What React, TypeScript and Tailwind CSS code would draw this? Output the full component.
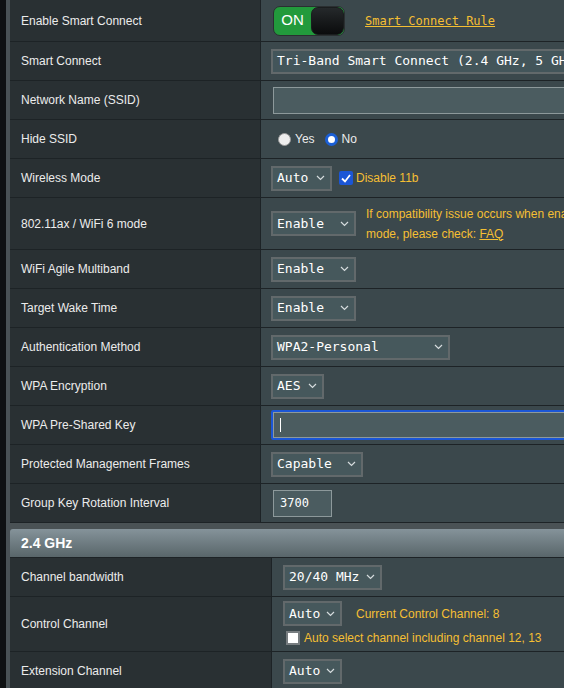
import type { ReactNode } from "react";

const sans = "font-['Liberation_Sans',Arial,sans-serif]";
const mono = "font-['DejaVu_Sans_Mono','Liberation_Mono',monospace]";

function Chevron() {
  return (
    <svg width="9" height="6" viewBox="0 0 9 6" className="shrink-0">
      <polyline points="1,1 4.5,4.5 8,1" fill="none" stroke="#d6dcde" strokeWidth="1.2" />
    </svg>
  );
}

function Select({ value, w }: { value: string; w: string }) {
  return (
    <div
      className={`${w} shrink-0 h-[25px] flex items-center justify-between pl-[4px] pr-[5px] bg-[#46585c] border-2 border-[#62696b] text-[13px] text-white ${mono}`}
    >
      <span className="whitespace-nowrap">{value}</span>
      <Chevron />
    </div>
  );
}

function Row({
  label,
  h,
  labelW = "w-[251px]",
  pad = "pl-[10px]",
  children,
}: {
  label: string;
  h: string;
  labelW?: string;
  pad?: string;
  children?: ReactNode;
}) {
  return (
    <div className={`flex ${h} border-b border-[#1d2326]`}>
      <div
        className={`${labelW} shrink-0 flex items-center pl-[11px] bg-[#293033] border-r border-[#1d2326] text-[12px] text-[#ececec] ${sans}`}
      >
        {label}
      </div>
      <div className={`flex-1 flex items-center ${pad} bg-[#3b484c] min-w-0`}>{children}</div>
    </div>
  );
}

const hint = "text-[#f5bf33]";

export default function App() {
  return (
    <div className="w-[564px] h-[688px] overflow-hidden flex bg-[#4a5255]">
      <div className="w-[6px] shrink-0 bg-[#0f1112]" />
      <div className="flex-1 pl-[4px] min-w-0">
        {/* Wireless general */}
        <div className="w-[660px]">
          <Row label="Enable Smart Connect" h="h-[42px]">
            <div className="ml-[2px] shrink-0 w-[72px] h-[30px] flex rounded-[7px] border border-[#2a2f31] bg-[#229a3c] overflow-hidden">
              <div className={`w-[37px] flex items-center justify-center text-white text-[15px] ${sans}`}>ON</div>
              <div className="flex-1 rounded-[7px] bg-gradient-to-b from-[#25292b] to-[#0b0c0d] border border-[#1a1d1e]" />
            </div>
            <a className={`ml-[20px] shrink-0 underline text-[12px] ${hint} ${mono}`}>Smart Connect Rule</a>
          </Row>
          <Row label="Smart Connect" h="h-[39px]">
            <div
              className={`w-[390px] shrink-0 h-[25px] flex items-center pl-[4px] bg-[#43555a] border-2 border-[#62696b] text-[13px] text-white whitespace-nowrap ${mono}`}
            >
              Tri-Band Smart Connect (2.4 GHz, 5 GHz-1, 5 GHz-2)
            </div>
          </Row>
          <Row label="Network Name (SSID)" h="h-[39px]">
            <div className="ml-[2px] shrink-0 w-[340px] h-[27px] bg-[#4b5c60] border border-[#8d999b]" />
          </Row>
          <Row label="Hide SSID" h="h-[39px]">
            <div className={`flex items-center text-[12px] text-[#ececec] ${sans}`}>
              <span className="ml-[7px] w-[13px] h-[13px] rounded-full bg-[#eeeeee] border border-[#9a9a9a]" />
              <span className="ml-[4px]">Yes</span>
              <span className="ml-[10px] w-[13px] h-[13px] rounded-full bg-white border-[3px] border-[#1b5fd6]" />
              <span className="ml-[4px]">No</span>
            </div>
          </Row>
          <Row label="Wireless Mode" h="h-[39px]">
            <Select value="Auto" w="w-[61px]" />
            <span className="ml-[7px] shrink-0 w-[14px] h-[14px] rounded-[2px] bg-[#1b56d6] flex items-center justify-center">
              <svg width="10" height="9" viewBox="0 0 10 9">
                <polyline points="1,4.5 4,7.5 9,1" fill="none" stroke="#fff" strokeWidth="1.8" />
              </svg>
            </span>
            <span className={`ml-[3px] text-[12px] ${hint} ${sans}`}>Disable 11b</span>
          </Row>
          <Row label="802.11ax / WiFi 6 mode" h="h-[52px]">
            <Select value="Enable" w="w-[85px]" />
            <div className={`ml-[10px] shrink-0 text-[12px] leading-[20px] whitespace-nowrap ${hint} ${sans}`}>
              If compatibility issue occurs when enabling 802.11ax / WiFi 6
              <br />
              mode, please check: <a className="underline">FAQ</a>
            </div>
          </Row>
          <Row label="WiFi Agile Multiband" h="h-[39px]">
            <Select value="Enable" w="w-[85px]" />
          </Row>
          <Row label="Target Wake Time" h="h-[39px]">
            <Select value="Enable" w="w-[85px]" />
          </Row>
          <Row label="Authentication Method" h="h-[39px]">
            <Select value="WPA2-Personal" w="w-[179px]" />
          </Row>
          <Row label="WPA Encryption" h="h-[39px]">
            <Select value="AES" w="w-[53px]" />
          </Row>
          <Row label="WPA Pre-Shared Key" h="h-[39px]">
            <div className="w-[340px] shrink-0 h-[30px] border-2 border-[#1b56d6] rounded-[2px]">
              <div className="w-full h-full bg-[#4b5c60] border border-[#8d999b] flex items-center pl-[6px]">
                <span className="w-[1px] h-[14px] bg-white" />
              </div>
            </div>
          </Row>
          <Row label="Protected Management Frames" h="h-[39px]">
            <Select value="Capable" w="w-[92px]" />
          </Row>
          <Row label="Group Key Rotation Interval" h="h-[39px]">
            <div
              className={`ml-[2px] shrink-0 w-[59px] h-[27px] flex items-center pl-[6px] bg-[#4b5c60] border border-[#8d999b] text-[12px] text-white ${mono}`}
            >
              3700
            </div>
          </Row>
        </div>

        {/* 2.4 GHz */}
        <div className="mt-[6px] w-[660px]">
          <div
            className={`h-[29px] flex items-center pl-[11px] rounded-tl-[3px] bg-gradient-to-b from-[#85939a] to-[#59666a] border-b border-[#1d2326] text-[14px] font-bold text-white ${sans}`}
          >
            2.4 GHz
          </div>
          <Row label="Channel bandwidth" h="h-[39px]" labelW="w-[262px]" pad="pl-[11px]">
            <Select value="20/40 MHz" w="w-[99px]" />
          </Row>
          <Row label="Control Channel" h="h-[55px]" labelW="w-[262px]" pad="pl-[11px]">
            <div className="flex flex-col shrink-0">
              <div className="flex items-center">
                <Select value="Auto" w="w-[59px]" />
                <span className={`ml-[14px] text-[12px] ${hint} ${sans}`}>Current Control Channel: 8</span>
              </div>
              <div className="flex items-center mt-[3px]">
                <span className="ml-[3px] shrink-0 w-[14px] h-[14px] bg-white border-2 border-[#777d80]" />
                <span className={`ml-[4px] text-[12px] ${hint} ${sans}`}>
                  Auto select channel including channel 12, 13
                </span>
              </div>
            </div>
          </Row>
          <Row label="Extension Channel" h="h-[39px]" labelW="w-[262px]" pad="pl-[11px]">
            <Select value="Auto" w="w-[59px]" />
          </Row>
        </div>
      </div>
    </div>
  );
}
